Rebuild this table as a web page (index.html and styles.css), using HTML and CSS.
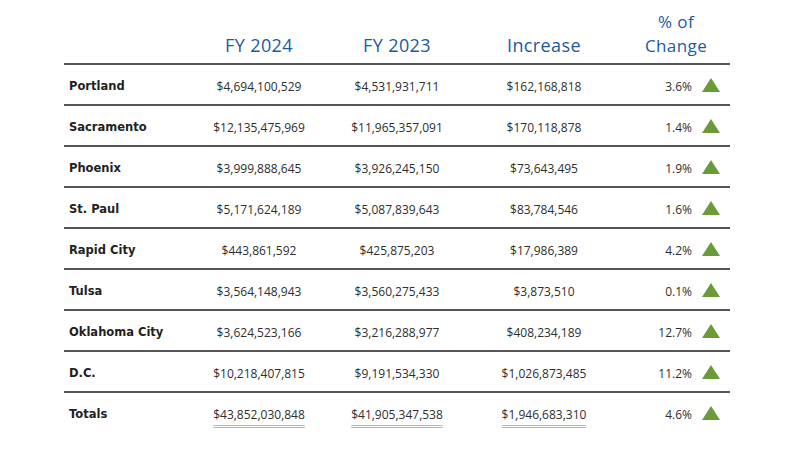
FILE: index.html
```html
<!DOCTYPE html>
<html lang="en">
<head>
<meta charset="utf-8">
<title>FY 2024 vs FY 2023</title>
<link rel="stylesheet" href="styles.css">
</head>
<body>
<div class="sheet">
  <div class="row head">
    <div class="cell label"></div>
    <div class="cell num">FY 2024</div>
    <div class="cell num">FY 2023</div>
    <div class="cell num">Increase</div>
    <div class="cell pct"><span class="hl">% of</span><span class="hl">Change</span></div>
  </div>

  <div class="row">
    <div class="cell label">Portland</div>
    <div class="cell num">$4,694,100,529</div>
    <div class="cell num">$4,531,931,711</div>
    <div class="cell num">$162,168,818</div>
    <div class="cell pct"><span class="val">3.6%</span><svg class="up" viewBox="0 0 18 14"><polygon points="9,0 18,14 0,14"/></svg></div>
  </div>
  <div class="row">
    <div class="cell label">Sacramento</div>
    <div class="cell num">$12,135,475,969</div>
    <div class="cell num">$11,965,357,091</div>
    <div class="cell num">$170,118,878</div>
    <div class="cell pct"><span class="val">1.4%</span><svg class="up" viewBox="0 0 18 14"><polygon points="9,0 18,14 0,14"/></svg></div>
  </div>
  <div class="row">
    <div class="cell label">Phoenix</div>
    <div class="cell num">$3,999,888,645</div>
    <div class="cell num">$3,926,245,150</div>
    <div class="cell num">$73,643,495</div>
    <div class="cell pct"><span class="val">1.9%</span><svg class="up" viewBox="0 0 18 14"><polygon points="9,0 18,14 0,14"/></svg></div>
  </div>
  <div class="row">
    <div class="cell label">St. Paul</div>
    <div class="cell num">$5,171,624,189</div>
    <div class="cell num">$5,087,839,643</div>
    <div class="cell num">$83,784,546</div>
    <div class="cell pct"><span class="val">1.6%</span><svg class="up" viewBox="0 0 18 14"><polygon points="9,0 18,14 0,14"/></svg></div>
  </div>
  <div class="row">
    <div class="cell label">Rapid City</div>
    <div class="cell num">$443,861,592</div>
    <div class="cell num">$425,875,203</div>
    <div class="cell num">$17,986,389</div>
    <div class="cell pct"><span class="val">4.2%</span><svg class="up" viewBox="0 0 18 14"><polygon points="9,0 18,14 0,14"/></svg></div>
  </div>
  <div class="row">
    <div class="cell label">Tulsa</div>
    <div class="cell num">$3,564,148,943</div>
    <div class="cell num">$3,560,275,433</div>
    <div class="cell num">$3,873,510</div>
    <div class="cell pct"><span class="val">0.1%</span><svg class="up" viewBox="0 0 18 14"><polygon points="9,0 18,14 0,14"/></svg></div>
  </div>
  <div class="row">
    <div class="cell label">Oklahoma City</div>
    <div class="cell num">$3,624,523,166</div>
    <div class="cell num">$3,216,288,977</div>
    <div class="cell num">$408,234,189</div>
    <div class="cell pct"><span class="val">12.7%</span><svg class="up" viewBox="0 0 18 14"><polygon points="9,0 18,14 0,14"/></svg></div>
  </div>
  <div class="row">
    <div class="cell label">D.C.</div>
    <div class="cell num">$10,218,407,815</div>
    <div class="cell num">$9,191,534,330</div>
    <div class="cell num">$1,026,873,485</div>
    <div class="cell pct"><span class="val">11.2%</span><svg class="up" viewBox="0 0 18 14"><polygon points="9,0 18,14 0,14"/></svg></div>
  </div>
  <div class="row total">
    <div class="cell label">Totals</div>
    <div class="cell num"><span class="dbl">$43,852,030,848</span></div>
    <div class="cell num"><span class="dbl">$41,905,347,538</span></div>
    <div class="cell num"><span class="dbl">$1,946,683,310</span></div>
    <div class="cell pct"><span class="val">4.6%</span><svg class="up" viewBox="0 0 18 14"><polygon points="9,0 18,14 0,14"/></svg></div>
  </div>
</div>
</body>
</html>
```

FILE: styles.css
```css
html, body {
  margin: 0;
  padding: 0;
  background: #ffffff;
}

body {
  font-family: "Open Sans", "Noto Sans", sans-serif;
  color: #2e2e2e;
}

.sheet {
  margin-left: 64px;
  width: 666px;
}

.row {
  display: grid;
  grid-template-columns: 126px 138px 138px 156px 108px;
  height: 39px;
  border-bottom: 2px solid #555555;
  align-items: center;
}

.row.total {
  border-bottom: none;
}

.row.head {
  height: 63px;
  align-items: end;
}

.head .cell {
  font-family: "Open Sans", "Noto Sans", sans-serif;
  font-size: 18px;
  line-height: 19px;
  color: #1b5a9f;
  letter-spacing: 0.4px;
  padding-top: 0;
  padding-bottom: 8px;
}

.head .pct {
  display: flex;
  flex-direction: column;
  align-items: center;
  font-size: 17px;
  line-height: 23.5px;
  padding-bottom: 6px;
}

.hl {
  display: block;
}

.cell {
  font-size: 12px;
  white-space: nowrap;
  padding-top: 3px;
}

.label {
  font-family: "DejaVu Sans", sans-serif;
  font-size: 11.5px;
  font-weight: bold;
  color: #222222;
  padding-left: 5px;
}

.num {
  text-align: center;
}

.pct {
  text-align: center;
}

.row:not(.head) .pct {
  display: flex;
  justify-content: flex-end;
  align-items: center;
  padding-right: 10px;
}

.val {
  margin-right: 10px;
}

.up {
  width: 18px;
  height: 14px;
  fill: #6b9a38;
  display: block;
  margin-top: -2px;
}

.dbl {
  text-decoration: underline double #b8b8b8;
  text-decoration-thickness: 1px;
  text-underline-offset: 6px;
}
```
